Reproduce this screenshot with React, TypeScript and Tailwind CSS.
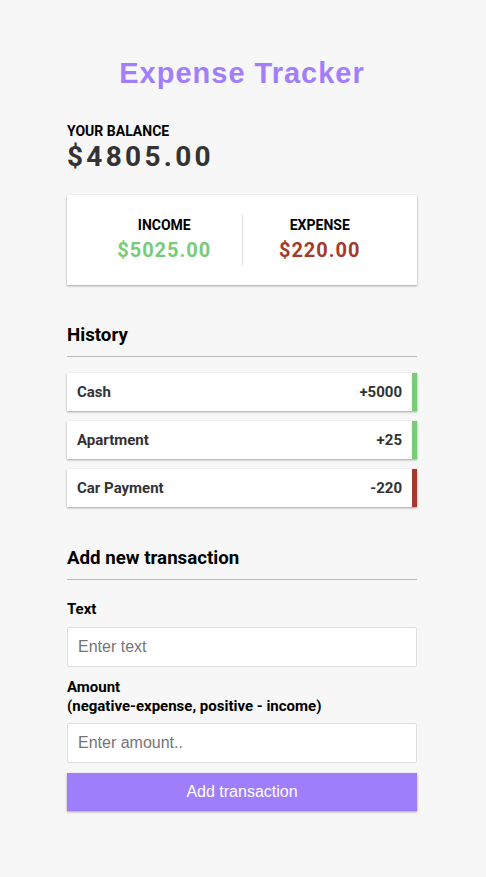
import React from "react";

const items = [
  { text: "Cash", amount: "+5000", plus: true },
  { text: "Apartment", amount: "+25", plus: true },
  { text: "Car Payment", amount: "-220", plus: false },
];

export default function App() {
  return (
    <div className="min-h-[877px] w-full bg-[#f7f7f7] pt-[56px] font-['Roboto',sans-serif]">
      <div className="ml-[67px] w-[350px]">
        <h1 className="text-center font-['Liberation_Sans',Arial,sans-serif] text-[29px] leading-[34px] font-bold tracking-[1px] text-[#a17ffb]">
          Expense Tracker
        </h1>

        <h4 className="mt-[31px] text-[14px] leading-[20px] font-bold uppercase text-black">Your Balance</h4>
        <div className="text-[28px] leading-[32px] font-bold tracking-[3.3px] text-[#333]">$4805.00</div>

        <div className="mt-[22px] flex bg-white p-[20px] shadow-[0_1px_3px_rgba(0,0,0,0.12),0_1px_2px_rgba(0,0,0,0.24)]">
          <div className="flex-1 border-r border-[#dedede] text-center">
            <h4 className="text-[14px] leading-[20px] font-bold uppercase text-black">Income</h4>
            <p className="my-[5px] text-[20px] leading-[20px] font-bold tracking-[1px] text-[#78cc78]">$5025.00</p>
          </div>
          <div className="flex-1 text-center">
            <h4 className="text-[14px] leading-[20px] font-bold uppercase text-black">Expense</h4>
            <p className="my-[5px] text-[20px] leading-[20px] font-bold tracking-[1px] text-[#a43a2e]">$220.00</p>
          </div>
        </div>

        <h3 className="mt-[39px] border-b border-[#bbb] pb-[10px] text-[18.72px] leading-[22px] font-bold text-black">History</h3>
        <ul className="mt-[16px] flex flex-col gap-[10px]">
          {items.map((it) => (
            <li
              key={it.text}
              className={
                "flex justify-between bg-white py-[10px] pl-[10px] pr-[10px] text-[15px] leading-[18px] font-bold text-[#333] shadow-[0_1px_3px_rgba(0,0,0,0.12),0_1px_2px_rgba(0,0,0,0.24)] border-r-[5px] " +
                (it.plus ? "border-[#78cc78]" : "border-[#a43a2e]")
              }
            >
              <span>{it.text}</span>
              <span>{it.amount}</span>
            </li>
          ))}
        </ul>

        <h3 className="mt-[40px] border-b border-[#bbb] pb-[10px] text-[18.72px] leading-[22px] font-bold text-black">Add new transaction</h3>
        <div className="mt-[10px] flex flex-col">
          <label className="mt-[10px] mb-[8px] block text-[15px] leading-[19px] font-bold text-black">Text</label>
          <input
            type="text"
            placeholder="Enter text"
            className="block h-[40px] w-full rounded-[2px] border border-[#dedede] bg-white px-[10px] font-['Liberation_Sans',Arial,sans-serif] text-[16px] placeholder:text-[#757575] outline-none"
          />
          <label className="mt-[11px] mb-[7px] block text-[15px] leading-[19px] font-bold text-black">
            Amount <br />
            (negative-expense, positive - income)
          </label>
          <input
            type="text"
            placeholder="Enter amount.."
            className="block h-[40px] w-full rounded-[2px] border border-[#dedede] bg-white px-[10px] font-['Liberation_Sans',Arial,sans-serif] text-[16px] placeholder:text-[#757575] outline-none"
          />
          <button className="mt-[10px] block h-[38px] w-full bg-[#9e7efa] font-['Liberation_Sans',Arial,sans-serif] text-[16px] text-white shadow-[0_1px_3px_rgba(0,0,0,0.12),0_1px_2px_rgba(0,0,0,0.24)]">
            Add transaction
          </button>
        </div>
      </div>
    </div>
  );
}
